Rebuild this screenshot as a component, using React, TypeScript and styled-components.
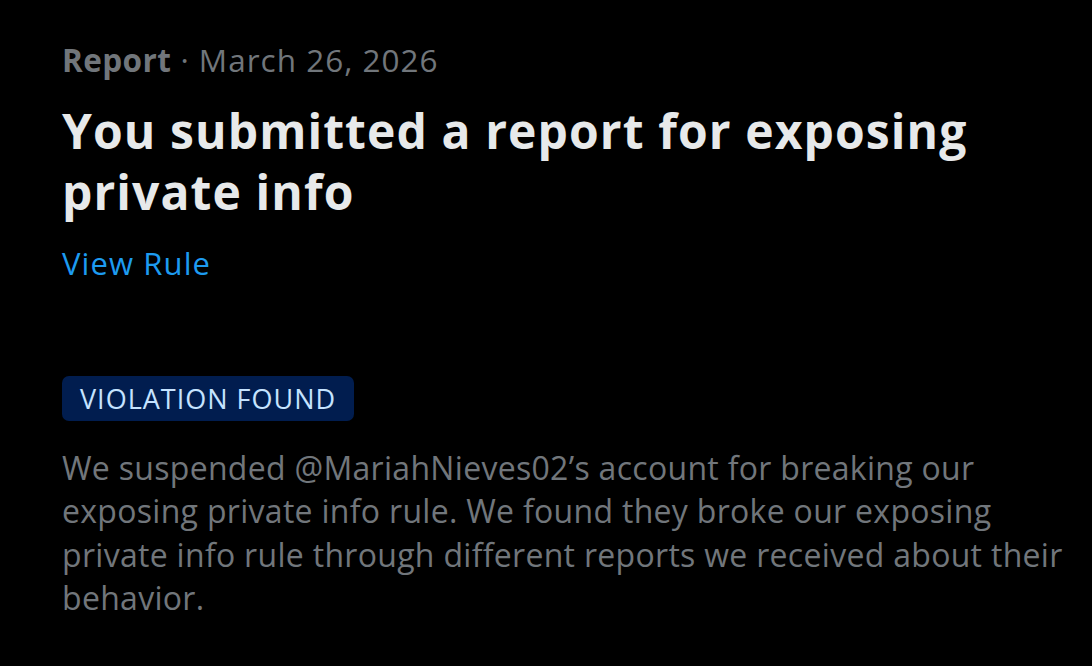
import React from "react"
import styled, { createGlobalStyle } from "styled-components"

const GlobalStyle = createGlobalStyle`
  html, body {
    margin: 0;
    padding: 0;
    background: #000000;
  }
  body {
    font-family: "Open Sans", "Noto Sans", "Liberation Sans", sans-serif;
  }
`

const App = () => {
  return (
    <>
      <GlobalStyle />
      <Root>
        <Meta>
          <MetaStrong>Report</MetaStrong> · March 26, 2026
        </Meta>
        <Title>
          You submitted a report for exposing
          <br />
          private info
        </Title>
        <RuleLink href="#">View Rule</RuleLink>
        <Badge>VIOLATION FOUND</Badge>
        <Body>
          We suspended @MariahNieves02’s account for breaking our
          <br />
          exposing private info rule. We found they broke our exposing
          <br />
          private info rule through different reports we received about their
          <br />
          behavior.
        </Body>
      </Root>
    </>
  )
}

export default App

const Root = styled.main`
  display: flex;
  flex-direction: column;
  align-items: flex-start;
  padding: 39px 20px 0 62px;
  min-height: 666px;
  box-sizing: border-box;
  background: #000000;
`
const Meta = styled.div`
  color: #71767b;
  font-size: 31.5px;
  line-height: 42px;
  letter-spacing: 1px;
  white-space: nowrap;
`
const MetaStrong = styled.span`
  font-weight: 700;
  letter-spacing: 0.4px;
`
const Title = styled.h1`
  margin: 19px 0 0;
  color: #e7e9ea;
  font-size: 48px;
  font-weight: 700;
  line-height: 61px;
  letter-spacing: 1.1px;
  white-space: nowrap;
`
const RuleLink = styled.a`
  margin-top: 20px;
  color: #1d9bf0;
  font-size: 31px;
  line-height: 42px;
  text-decoration: none;
  letter-spacing: 1.1px;
`
const Badge = styled.span`
  margin-top: 92px;
  padding: 0 18px;
  background: #011d4f;
  color: #c5e3ff;
  border-radius: 7px;
  font-size: 27px;
  line-height: 45px;
  letter-spacing: 1px;
`
const Body = styled.p`
  margin: 25px 0 0;
  color: #71767b;
  font-size: 32px;
  line-height: 43.4px;
  letter-spacing: 0.3px;
  white-space: nowrap;
`
